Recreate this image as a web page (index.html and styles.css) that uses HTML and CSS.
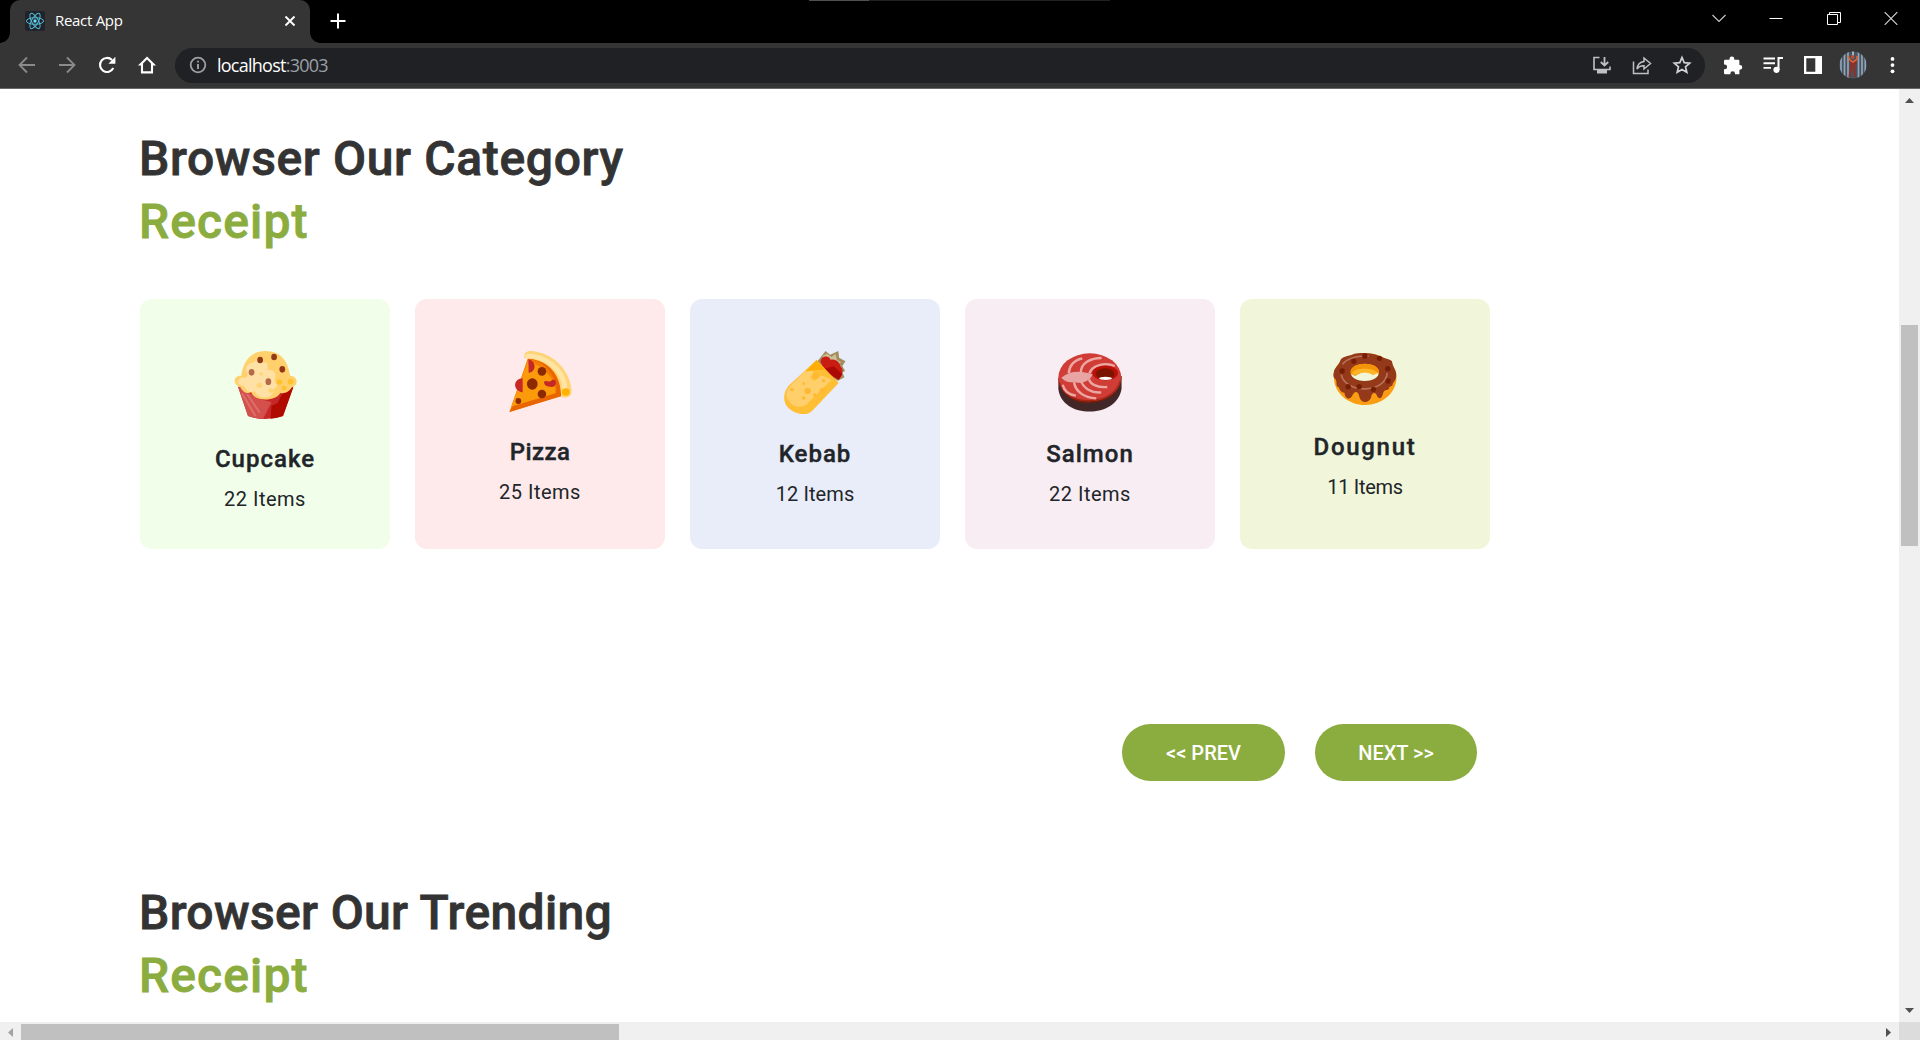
FILE: index.html
```html
<!DOCTYPE html>
<html lang="en">
<head>
<meta charset="utf-8">
<title>React App</title>
<link rel="stylesheet" href="styles.css">
</head>
<body>
<header class="tabstrip">
  <i class="top-line"></i>
  <div class="tab">
    <svg class="favicon" viewBox="0 0 20 20"><rect width="20" height="20" rx="2" fill="#20232a"/><g fill="none" stroke="#53b9d3" stroke-width="1"><ellipse cx="10" cy="10" rx="8.6" ry="3.3"/><ellipse cx="10" cy="10" rx="8.6" ry="3.3" transform="rotate(60 10 10)"/><ellipse cx="10" cy="10" rx="8.6" ry="3.3" transform="rotate(120 10 10)"/></g><circle cx="10" cy="10" r="1.7" fill="#61dafb"/></svg>
    <span class="tab-title">React App</span>
    <svg class="tab-close" viewBox="0 0 12 12"><path d="M1.5 1.5l9 9M10.500 1.500l-9 9" stroke="#fff" stroke-width="1.900"/></svg>
  </div>
  <svg class="new-tab" viewBox="0 0 16 16"><path d="M8 .5v15M.5 8h15" stroke="#fff" stroke-width="2"/></svg>
  <div class="window-controls">
    <svg viewBox="0 0 14 14"><path d="M.5 4l6.500 6.500L13.500 4" fill="none" stroke="#ccc" stroke-width="1.100"/></svg>
    <svg viewBox="0 0 14 14"><path d="M.5 7.500h13" stroke="#fff"/></svg>
    <svg viewBox="0 0 14 14"><path d="M.5 3.500h10v10H.5zM2.500 3.500v-2h11v10h-3" fill="none" stroke="#fff"/></svg>
    <svg viewBox="0 0 14 14"><path d="M.7 1.200l12.600 12.600M13.300 1.200L.7 13.800" stroke="#ddd" stroke-width="1.100"/></svg>
  </div>
</header>
<nav class="toolbar">
  <span class="cell"><svg viewBox="0 0 20 20"><path d="M18 10H3M10 2.500L2.500 10l7.500 7.500" fill="none" stroke="#8b8b8b" stroke-width="1.800"/></svg></span>
  <span class="cell"><svg viewBox="0 0 20 20"><path d="M2 10h15M10 2.500l7.500 7.500-7.500 7.500" fill="none" stroke="#8b8b8b" stroke-width="1.800"/></svg></span>
  <span class="cell"><svg viewBox="0 0 20 20"><path d="M16.300 13A7 7 0 1 1 15 5" fill="none" stroke="#fff" stroke-width="2.100"/><path d="M18.400 1.800v7h-7z" fill="#fff"/></svg></span>
  <span class="cell"><svg viewBox="0 0 20 20"><path d="M10 3L3.500 9.400H5v8h10v-8h1.500z" fill="none" stroke="#fff" stroke-width="2.100"/></svg></span>
  <div class="omnibox">
    <svg class="info" viewBox="0 0 20 20"><circle cx="10" cy="10" r="7.300" fill="none" stroke="#9aa0a6" stroke-width="1.800"/><path d="M10 9v5M10 5.700v1.900" stroke="#9aa0a6" stroke-width="1.900"/></svg>
    <span class="url">localhost<span class="port">:3003</span></span>
    <span class="cell"><svg viewBox="0 0 20 20"><path d="M7.500 2.500H2v12h16v-3" fill="none" stroke="#bdc1c6" stroke-width="1.600"/><path d="M5 15h10v3.500H5z" fill="#bdc1c6"/><path d="M12.500 2v8M8.800 7l3.700 3.500L16.200 7" fill="none" stroke="#bdc1c6" stroke-width="1.800"/></svg></span>
    <span class="cell"><svg viewBox="0 0 20 20"><path d="M1.500 6.500v12H16v-4" fill="none" stroke="#bdc1c6" stroke-width="1.500"/><path d="M5 14c.5-4.500 3-7 7-7.500V3l6.500 5.500L12 14v-3.300c-3-.2-5.300.8-7 3.300z" fill="none" stroke="#bdc1c6" stroke-width="1.500"/></svg></span>
    <span class="cell"><svg viewBox="0 0 20 20"><path d="M10 2.500l2.200 5.100 5.500.5-4.200 3.700 1.300 5.500-4.800-2.900-4.800 2.900 1.300-5.500-4.200-3.700 5.500-.5z" fill="none" stroke="#cfd1d4" stroke-width="1.700"/></svg></span>
  </div>
  <div class="extensions">
    <span class="cell"><svg viewBox="0 0 20 20"><path d="M2.200 4.800h4.300V4a2.400 2.400 0 0 1 4.800 0v.8h3.900q1.200 0 1.200 1.200v3.900h.5a2.400 2.400 0 0 1 0 4.800h-.5v4.500H12v-.6a2.300 2.300 0 0 0-4.600 0v.6H2.200q-1.200 0-1.200-1.200v-3.700h.7a2.400 2.400 0 0 0 0-4.800H1V6q0-1.200 1.200-1.200z" fill="#fff"/></svg></span>
    <span class="cell"><svg viewBox="0 0 20 20"><path d="M.5 3.500h11.500M.5 8.200h11.500M.5 12.900h7.500" stroke="#fff" stroke-width="1.900"/><path d="M15.500 15V3H20" fill="none" stroke="#fff" stroke-width="2"/><circle cx="13.500" cy="14.800" r="3.100" fill="#fff"/></svg></span>
    <span class="cell"><svg viewBox="0 0 20 20"><path d="M1 1h18v18H1zM3.300 3.300v13.400h9V3.300z" fill="#fff" fill-rule="evenodd"/></svg></span>
    <span class="cell"><svg class="avatar" viewBox="0 0 28 28"><clipPath id="face"><circle cx="14" cy="14" r="13.600"/></clipPath><g clip-path="url(#face)"><path fill="#4a5260" d="M0 0h28v28H0z"/><path d="M2 0v28M5.500 0v28M9 0v28M19.500 0v28M23 0v28M26.300 0v28" stroke="#8fa6b8" stroke-width="1.700"/><path d="M14 0v7" stroke="#9fb2c0" stroke-width="2"/><path d="M10 8l4 2 3.500-2 .5 5-1.500 2 .5 11h-2l-1.300-9-2.500 9H9.500l1.500-12z" fill="#87342f"/><path d="M9 5l2 4 3 2 4-3V5" fill="none" stroke="#e8642f" stroke-width="1.500"/><circle cx="13.500" cy="6" r="1.900" fill="#b84d32"/></g></svg></span>
    <span class="cell"><svg viewBox="0 0 20 20" fill="#fff"><circle cx="9.500" cy="3.900" r="1.900"/><circle cx="9.500" cy="10.100" r="1.900"/><circle cx="9.500" cy="16.300" r="1.900"/></svg></span>
  </div>
</nav>
<div class="viewport">
  <main class="page">
    <h1 class="heading category">Browser Our Category<br><span class="accent">Receipt</span></h1>
    <section class="cards">
      <article class="card mint">
        <svg class="food" style="height:70px" preserveAspectRatio="none" viewBox="287 177 182 210">
          <path d="M301 290l28 88q48 18 98 0l29-88z" fill="#c62828"/>
          <path d="M301 290l28 88q24 9 42 9l24-50-40-12-40-30z" fill="#d3504c"/>
          <path d="M312 310l38 68M326 312l36 56" stroke="#dc6e69" stroke-width="6"/>
          <path d="M395 347l17-8 14-30 30-17-29 86q-15 7-35 8z" fill="#b00b00"/>
          <path d="M307 291c-24-8-18-36 3-34 6-46 28-74 68-74s62 26 69 74c21 0 25 28 5 35-9 15-20 20-33 17-10 25-72 28-81-2-14 6-23-1-31-16z" fill="#ffd06c"/>
          <path d="M343 218c12-14 21-1 40 0l1 22c22-2 24 15 20 25-2 16 15 20 1 29-9 5-1 15-9 19-10 16-42 12-48-10-15 8-24-2-30-15-23-2-20-26-2-25 14 1 15-11 8-19-1-14 2-24 19-26z" fill="#ffe1a6"/>
          <g fill="#ffd477"><circle cx="361" cy="286" r="8"/><circle cx="393" cy="302" r="7"/><circle cx="366" cy="252" r="5"/></g><g fill="#ffc12c"><circle cx="417" cy="276" r="8"/><circle cx="430" cy="294" r="7"/><circle cx="448" cy="275" r="8"/></g>
          <g fill="#933819"><ellipse cx="363" cy="210" rx="8" ry="10"/><ellipse cx="402" cy="201" rx="8" ry="10"/><ellipse cx="425" cy="238" rx="8" ry="10"/></g><g fill="#b66b48"><ellipse cx="339" cy="247" rx="8" ry="10"/><ellipse cx="386" cy="275" rx="8" ry="10"/></g>
        </svg>
        <h2>Cupcake</h2><p>22 Items</p>
      </article>
      <article class="card rose">
        <svg class="food" style="height:63px" preserveAspectRatio="none" viewBox="1057 177 182 189">
          <path d="M1112 206q40-10 72 35 24 35 22 76l-145 49z" fill="#f57c00"/>
          <path d="M1114 210l-48 140 125-40q-3-62-77-100z" fill="#fb9a0a"/>
          <path d="M1112 206q59 8 79 76 3 17 0 28l-120 39-10 17 145-47q0-51-29-83-29-31-65-30z" fill="#e96500"/>
          <path d="M1103 204c-3-15 5-22 21-21 58 6 106 56 111 117 2 20-14 27-29 20-1-76-41-111-103-116z" fill="#ffd477"/>
          <path d="M1112 198c50 0 98 38 104 93" fill="none" stroke="#ffe4a5" stroke-width="14" stroke-linecap="round"/>
          <circle cx="1219" cy="306" r="11" fill="#ffb300"/>
          <path d="M1114 208c23 5 23 38 1 41zM1098 265c-28 1-28 38 0 42zM1158 277c3-10 14 4 22-7 14-6 16 19 0 21-14 0-22-5-22-14z" fill="#c62828"/>
          <g fill="#8b2a00"><ellipse cx="1125" cy="282" rx="15" ry="17"/><ellipse cx="1152" cy="244" rx="12" ry="13"/><ellipse cx="1152" cy="312" rx="12" ry="13"/><ellipse cx="1086" cy="333" rx="8" ry="9"/></g>
        </svg>
        <h2>Pizza</h2><p>25 Items</p>
      </article>
      <article class="card sky">
        <svg class="food" style="height:65px" preserveAspectRatio="none" viewBox="287 177 182 195">
          <path d="M384 213l22-30 13 11 23-11 2 20 18 11-9 14 8 15-8 4 6 15-18 10-30-13z" fill="#a38e5b"/>
          <path d="M397 199l13-8 13 10 11-9 4 17 11 8-10 10-29-16z" fill="#cebf98"/>
          <path d="M392 216c2-20 24-21 28-7 17-4 28 11 27 20 11 9 8 23-4 40l-35-20z" fill="#c91c13"/><path d="M397 238l33-9 23 24-10 16z" fill="#ad0904"/>
          <path d="M381 210l62 69-74 83c-18 19-47 9-64-5-21-19-18-52-1-71z" fill="#ffbf35"/>
          <path d="M381 211l24 28-31 4-10 20 11 10 20-17 27 14-70 74c-24 14-43 3-54-21-6-22 9-34 20-47l45-48z" fill="#ffcf6b"/>
          <path d="M381 210l25 29-56 5z" fill="#ffae07"/>
          <g fill="#ffb832"><circle cx="356" cy="303" r="9"/><circle cx="312" cy="299" r="5"/><circle cx="345" cy="281" r="4"/><circle cx="345" cy="324" r="5"/><circle cx="376" cy="315" r="5"/><circle cx="401" cy="272" r="5"/><circle cx="379" cy="257" r="9"/><circle cx="397" cy="303" r="8"/></g>
        </svg>
        <h2>Kebab</h2><p>12 Items</p>
      </article>
      <article class="card blush">
        <svg class="food" style="height:65px" preserveAspectRatio="none" viewBox="1057 177 182 195">
          <path d="M1058 265v31c8 91 164 92 177 0v-37z" fill="#412728"/>
          <path d="M1058 265c8 52 43 75 84 74 45 0 91-25 93-80" fill="#7b1d05"/>
          <ellipse cx="1146" cy="262" rx="88" ry="72" fill="#cf3d36"/>
          <path d="M1060 276c11 40 47 58 88 56 44-3 73-25 84-60" fill="none" stroke="#a52518" stroke-width="4"/>
          <path d="M1066 263c27-24 57-20 88-10-8 23-35 31-50 22-15 4-26 0-38-12z" fill="#e8a5a3"/>
          <path d="M1087 249c3-27 19-40 38-44M1121 248c0-30 29-44 58-44M1145 250c7-23 43-35 71-22M1070 284c4 17 17 30 37 33M1102 276c3 27 27 47 62 49M1120 270c8 25 31 40 58 37M1144 268c4 15 24 26 51 23" fill="none" stroke="#eda7a3" stroke-width="7"/>
          <ellipse cx="1189" cy="249" rx="36" ry="22" fill="#ba1009"/><ellipse cx="1189" cy="252" rx="26" ry="17" fill="#791500"/><ellipse cx="1190" cy="265" rx="18" ry="5" fill="#fff"/>
        </svg>
        <h2>Salmon</h2><p>22 Items</p>
      </article>
      <article class="card lime">
        <svg class="food" style="height:58px" preserveAspectRatio="none" viewBox="337.500 177 195 174">
          <path fill-rule="evenodd" d="M340 260c0-46 47-70 94-70s94 25 94 72c0 50-45 83-94 83s-94-35-94-85zm52-5c8 26 75 26 82 0-10-31-73-31-82 0z" fill="#fb9d13"/>
          <path fill-rule="evenodd" d="M340 247c0-12 15-20 20-37 5-12 29-11 39-18 24-5 59-4 79 7 15 7 29 9 36 14 5 25 15 28 13 45-1 17-10 17-11 27-3 7-7 1-10 8-3 12-13 1-18 16-5 22-15 18-20 5-4-10-16-5-16 8-6 19-31 19-35 0-3-21-16-20-21-6-10 20-24 5-24-8-15-1-13-14-19-18-8 0-2-11-8-22-8-7-7-12-5-21zm50 0c0 35 85 35 86 0-2-34-82-34-86 0z" fill="#94391a"/>
          <path d="M366 223c15-21 42-26 79-25M362 254c13 59 134 56 138-5" fill="none" stroke="#b9735b" stroke-width="5"/>
          <path d="M390 246c0-33 84-33 86 0-10 6-17 1-31-1s-30 7-41 13q-14-6-14-12z" fill="#f39407"/><path d="M394 249c12-17 66-17 77 0l-13 7c-17-11-36-11-53 0z" fill="#ffb525"/>
          <g fill="#761d06"><circle cx="433" cy="198" r="8"/><circle cx="400" cy="214" r="8"/><circle cx="477" cy="205" r="8"/><circle cx="365" cy="243" r="8"/><circle cx="502" cy="236" r="8"/><circle cx="503" cy="273" r="8"/><circle cx="383" cy="290" r="8"/><circle cx="416" cy="290" r="8"/><circle cx="459" cy="298" r="8"/></g>
        </svg>
        <h2>Dougnut</h2><p>11 Items</p>
      </article>
    </section>
    <div class="pager"><button class="prev">&lt;&lt; PREV</button><button class="next">NEXT &gt;&gt;</button></div>
    <h1 class="heading trending">Browser Our Trending<br><span class="accent">Receipt</span></h1>
  </main>
  <aside class="scroll-y">
    <svg class="arrow" viewBox="0 0 9 5"><path d="M0 5L4.500 0 9 5z" fill="#505050"/></svg>
    <i class="thumb"></i>
    <svg class="arrow" viewBox="0 0 9 5"><path d="M0 0l4.500 5L9 0z" fill="#505050"/></svg>
  </aside>
  <footer class="scroll-x">
    <svg class="arrow" viewBox="0 0 5 9"><path d="M5 0L0 4.500 5 9z" fill="#a3a3a3"/></svg>
    <i class="thumb"></i>
    <svg class="arrow" viewBox="0 0 5 9"><path d="M0 0l5 4.500L0 9z" fill="#505050"/></svg>
  </footer>
  <i class="corner"></i>
</div>
</body>
</html>
```
FILE: styles.css
```css
* { box-sizing: border-box; }
body { margin: 0; width: 1920px; height: 1040px; overflow: hidden; background: #fff; font-family: Roboto, sans-serif; color: #212529; }
svg { display: block; flex: none; }

.tabstrip { position: relative; display: flex; height: 43px; padding-left: 10px; background: #000; font-family: "Open Sans", sans-serif; }
.top-line { position: absolute; left: 809px; top: 0; width: 301px; height: 1px; background: linear-gradient(90deg, #505050 60px, #202020 60px); }
.tab { position: relative; display: flex; align-items: center; width: 300px; padding: 0 15px 1px; background: #353535; border-radius: 10px 10px 0 0; }
.tab::before, .tab::after { content: ""; position: absolute; bottom: 0; width: 10px; height: 10px; }
.tab::before { left: -10px; background: radial-gradient(circle at 0 0, #000 9.5px, #353535 10px); }
.tab::after { right: -10px; background: radial-gradient(circle at 100% 0, #000 9.5px, #353535 10px); }
.favicon { width: 20px; height: 20px; margin-right: 10px; }
.tab-title { margin-top: -2px; font-size: 15px; line-height: 20px; color: #fff; letter-spacing: -.3px; }
.tab-close { width: 12px; height: 12px; margin-left: auto; margin-right: -1px; }
.new-tab { width: 16px; height: 16px; margin: 13px 0 0 20px; }
.window-controls { display: flex; gap: 43.5px; margin: 11px 22px 0 auto; }
.window-controls svg { width: 14px; height: 14px; }

.toolbar { display: flex; align-items: center; height: 46px; padding: 0 7px 1px; background: #353535; border-bottom: 1px solid #686868; font-family: "Open Sans", sans-serif; }
.cell { display: flex; flex: none; align-items: center; justify-content: center; width: 40px; height: 40px; }
.cell svg { width: 20px; height: 20px; }
.cell .avatar { width: 28px; height: 28px; }
.omnibox { display: flex; align-items: center; width: 1530px; height: 35px; margin-left: 8px; padding: 0 3px 0 13px; background: #202124; border-radius: 18px; }
.info { width: 20px; height: 20px; margin-right: 9px; }
.url { flex: 1; font-size: 18px; line-height: 24px; color: #fff; letter-spacing: -.75px; }
.port { color: #9aa0a6; }
.extensions { display: flex; margin-left: 8px; }

.viewport { display: grid; grid-template: 933px 18px / 1899px 21px; }
.page { padding: 38px 0 0 140px; overflow: hidden; }
.heading { margin: 0 0 0 -1px; font-size: 48px; line-height: 63px; font-weight: 500; color: #333; -webkit-text-stroke: .8px; }
.category { letter-spacing: .65px; }
.trending { letter-spacing: .35px; }
.accent { color: #8bac3e; letter-spacing: 1.1px; }
.cards { display: grid; grid-template-columns: repeat(5, 250px); gap: 25px; margin-top: 46px; }
.card { height: 250px; padding-top: 50px; border-radius: 12px; text-align: center; }
.mint { background: #f0feea; }
.rose { background: #feeaea; }
.sky { background: #e9edfa; }
.blush { background: #f9edf4; }
.lime { background: #f1f6da; }
.food { width: 65px; margin: 0 auto; }
.card h2 { margin: 25px 0 10px; font-size: 24px; line-height: 30px; font-weight: 500; letter-spacing: 1px; -webkit-text-stroke: .4px; }
.card p { margin: 0; font-size: 20px; line-height: 30px; letter-spacing: .5px; }
.rose h2 { letter-spacing: .4px; }
.lime h2 { letter-spacing: 1.7px; }
.sky p { letter-spacing: .1px; }
.lime p { letter-spacing: -.3px; }
.pager { display: flex; gap: 30px; margin: 175px 0 100px 982px; }
.pager button { height: 57px; width: 163px; padding: 0; border: 0; border-radius: 29px; background: #8bac3e; color: #fff; font: 500 20px/30px Roboto, sans-serif; }
.pager .next { width: 162px; }

.scroll-y { display: flex; flex-direction: column; align-items: center; padding: 9px 0; background: #f0f0f0; }
.scroll-y .arrow { width: 9px; height: 5px; }
.scroll-y .thumb { width: 17px; height: 221px; margin: 222px 0 auto; background: #c0c0c0; }
.scroll-x { display: flex; align-items: center; padding: 2px 8px 0; background: #f0f0f0; }
.scroll-x .arrow { width: 5px; height: 9px; }
.scroll-x .thumb { width: 598px; height: 16px; margin: 0 auto 0 8px; background: #c0c0c0; }
.corner { background: #dcdcdc; }
```
